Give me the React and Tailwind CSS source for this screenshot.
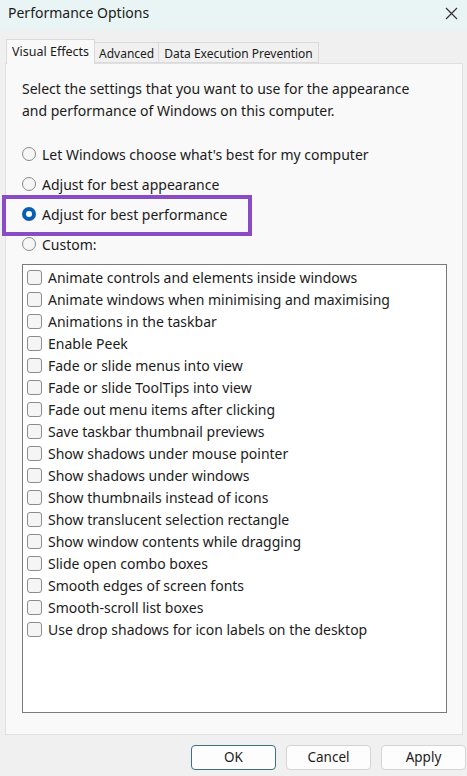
import React from 'react';

const EFFECTS = [
  'Animate controls and elements inside windows',
  'Animate windows when minimising and maximising',
  'Animations in the taskbar',
  'Enable Peek',
  'Fade or slide menus into view',
  'Fade or slide ToolTips into view',
  'Fade out menu items after clicking',
  'Save taskbar thumbnail previews',
  'Show shadows under mouse pointer',
  'Show shadows under windows',
  'Show thumbnails instead of icons',
  'Show translucent selection rectangle',
  'Show window contents while dragging',
  'Slide open combo boxes',
  'Smooth edges of screen fonts',
  'Smooth-scroll list boxes',
  'Use drop shadows for icon labels on the desktop',
];

const OPTIONS = [
  { label: "Let Windows choose what's best for my computer", checked: false },
  { label: 'Adjust for best appearance', checked: false },
  { label: 'Adjust for best performance', checked: true },
  { label: 'Custom:', checked: false },
];

function Radio({ checked }) {
  return checked ? (
    <span className="w-[14px] h-[14px] rounded-full bg-[#0a5fb4] flex items-center justify-center shrink-0">
      <span className="w-[6px] h-[6px] rounded-full bg-white"></span>
    </span>
  ) : (
    <span className="w-[14px] h-[14px] rounded-full border border-[#8a8a8a] bg-[#f6f6f6] shrink-0"></span>
  );
}

export default function App() {
  return (
    <div
      className="relative w-[467px] h-[776px] bg-[#f0f0f0] flex flex-col text-[#1b1b1b] overflow-hidden"
      style={{ fontFamily: '"Noto Sans", "Open Sans", sans-serif' }}
    >
      {/* Title bar */}
      <div className="h-[30px] flex items-center justify-between pl-[8px] pr-[9px] pb-[4px] bg-[#e9f4f4]">
        <span className="text-[14px] leading-none">Performance Options</span>
        <svg width="13" height="13" viewBox="0 0 13 13">
          <path d="M1 1 L12 12 M12 1 L1 12" stroke="#333" strokeWidth="1.2" fill="none" />
        </svg>
      </div>

      {/* Tabs */}
      <div className="flex items-end pl-[6px] mt-[8px] h-[25px]">
        <div className="h-[25px] px-[5px] pt-[3px] text-[12.5px] bg-[#f9f9f9] border border-b-0 border-[#dadada] relative z-10 -mb-px">
          Visual Effects
        </div>
        <div className="h-[21px] px-[4px] pt-[2px] text-[12px] border border-l-0 border-[#dadada] bg-[#f0f0f0]">Advanced</div>
        <div className="h-[21px] px-[5px] pt-[2px] text-[12px] border border-l-0 border-[#dadada] bg-[#f0f0f0]">
          Data Execution Prevention
        </div>
      </div>

      {/* Panel */}
      <div className="mx-[5px] w-[458px] h-[672px] bg-[#f9f9f9] border border-[#e0e0e0] pl-[16px] pt-[14px] flex flex-col">
        <p className="text-[14px] leading-[22px] w-[415px]">
          Select the settings that you want to use for the appearance and performance of Windows on this computer.
        </p>

        <div className="mt-[21px] flex flex-col gap-[8px]">
          {OPTIONS.map(o => (
            <div key={o.label} className="h-[22px] flex items-center gap-[6px] text-[14px]">
              <Radio checked={o.checked} />
              <span>{o.label}</span>
            </div>
          ))}
        </div>

        <div className="mt-[9px] w-[425px] h-[449px] bg-white border border-[#7a7a7a] pt-[1px] pl-[4px]">
          {EFFECTS.map(e => (
            <div key={e} className="h-[22px] flex items-center gap-[6px] text-[14px]">
              <span className="w-[15px] h-[15px] rounded-[3px] border border-[#8d8d8d] bg-[#f5f5f5] shrink-0"></span>
              <span>{e}</span>
            </div>
          ))}
        </div>
      </div>

      {/* Buttons */}
      <div className="flex justify-end gap-[10px] mt-[10px] pr-[1px] text-[13.5px]">
        <button className="w-[85px] h-[25px] rounded-[4px] bg-[#fdfdfd] border border-[#3f6f82]">OK</button>
        <button className="w-[85px] h-[25px] rounded-[4px] bg-[#fdfdfd] border border-[#d4d4d4]">Cancel</button>
        <button className="w-[85px] h-[25px] rounded-[4px] bg-[#fdfdfd] border border-[#d4d4d4]">Apply</button>
      </div>

      {/* Highlight annotation */}
      <div className="absolute left-[2px] top-[195px] w-[250px] h-[41px] border-[4px] border-[#8a4cc6] pointer-events-none"></div>
    </div>
  );
}
